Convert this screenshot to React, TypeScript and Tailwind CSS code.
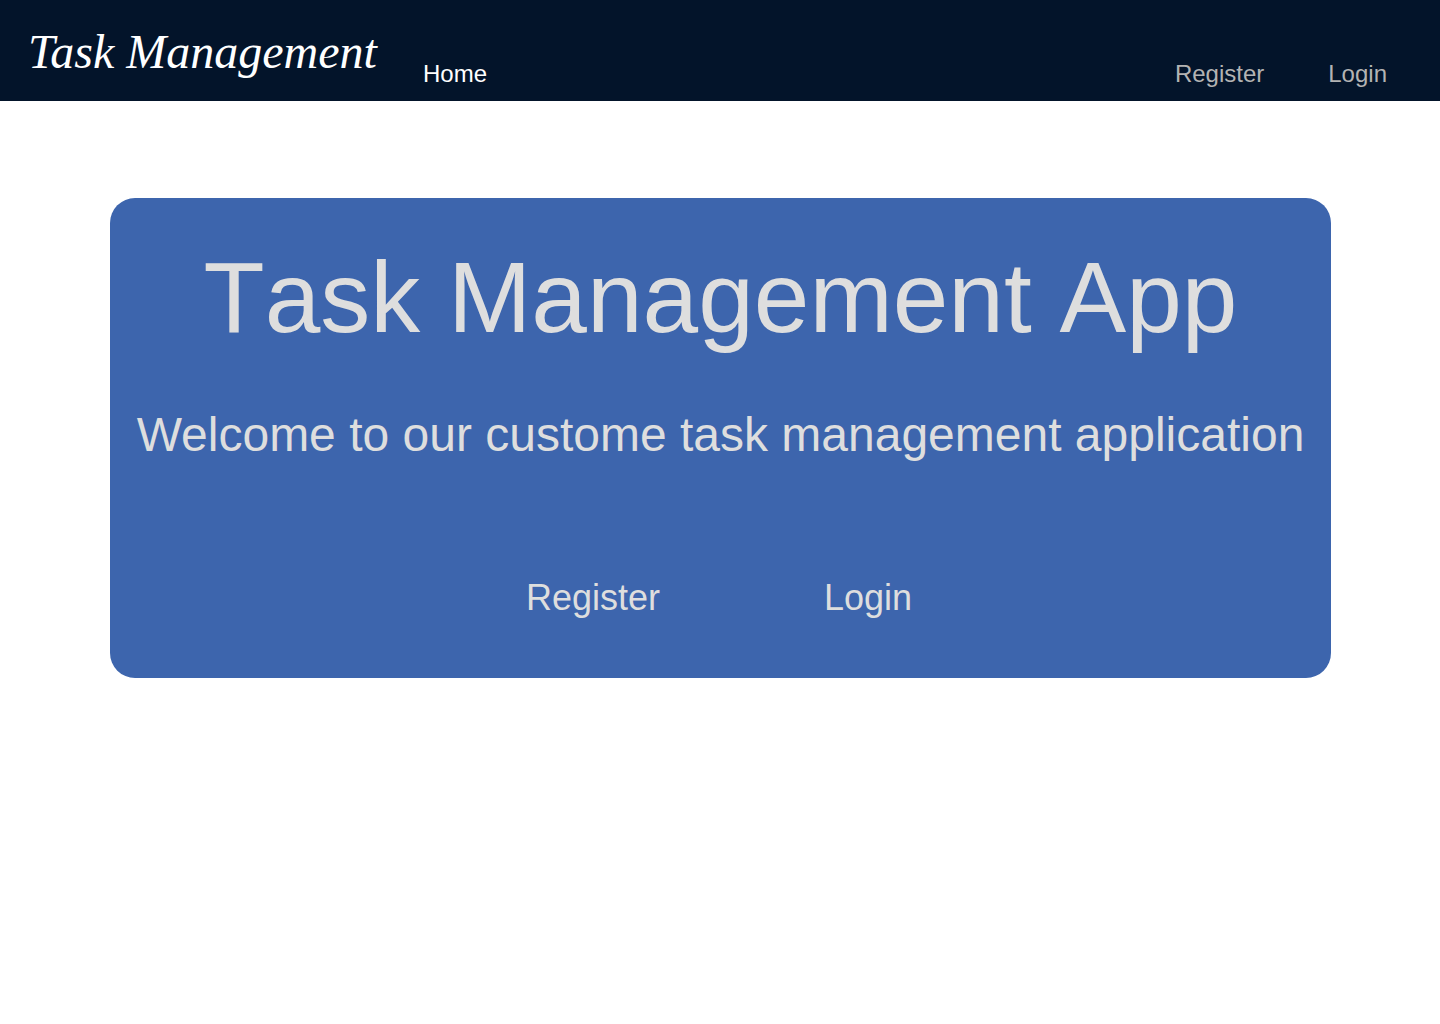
export default function App() {
  return (
    <div className="min-h-screen bg-white font-['Liberation_Sans',Arial,sans-serif]">
      <header className="bg-[#03142a]">
        <nav className="flex items-end pt-[18px] pr-[53px] pb-3 pl-7 text-2xl leading-[30px]">
          <a
            href="#"
            className="mr-[46px] w-[349px] pb-[3px] font-['Z003','Apple_Chancery','Liberation_Serif',serif] text-[48px] leading-[68px] whitespace-nowrap text-white italic"
          >
            Task Management
          </a>
          <a href="#" className="text-white">Home</a>
          <div className="ml-auto flex gap-16 text-[#b3b3b3]">
            <a href="#register">Register</a>
            <a href="#login">Login</a>
          </div>
        </nav>
      </header>
      <main className="pt-[97px] pr-[109px] pl-[110px]">
        <section className="flex flex-col items-center rounded-[25px] bg-[#3d65ad] pt-[42px] pb-[59px] text-[#dedede]">
          <h1 className="text-[100px] leading-[115px] whitespace-nowrap [font-kerning:none]">Task Management App</h1>
          <p className="mt-[52px] text-[48px] leading-[56px] whitespace-nowrap">
            Welcome to our custome task management application
          </p>
          <div className="mt-[114px] flex gap-[164px] pr-[3px] text-4xl leading-[42px]">
            <a href="#register">Register</a>
            <a href="#login">Login</a>
          </div>
        </section>
      </main>
    </div>
  );
}
